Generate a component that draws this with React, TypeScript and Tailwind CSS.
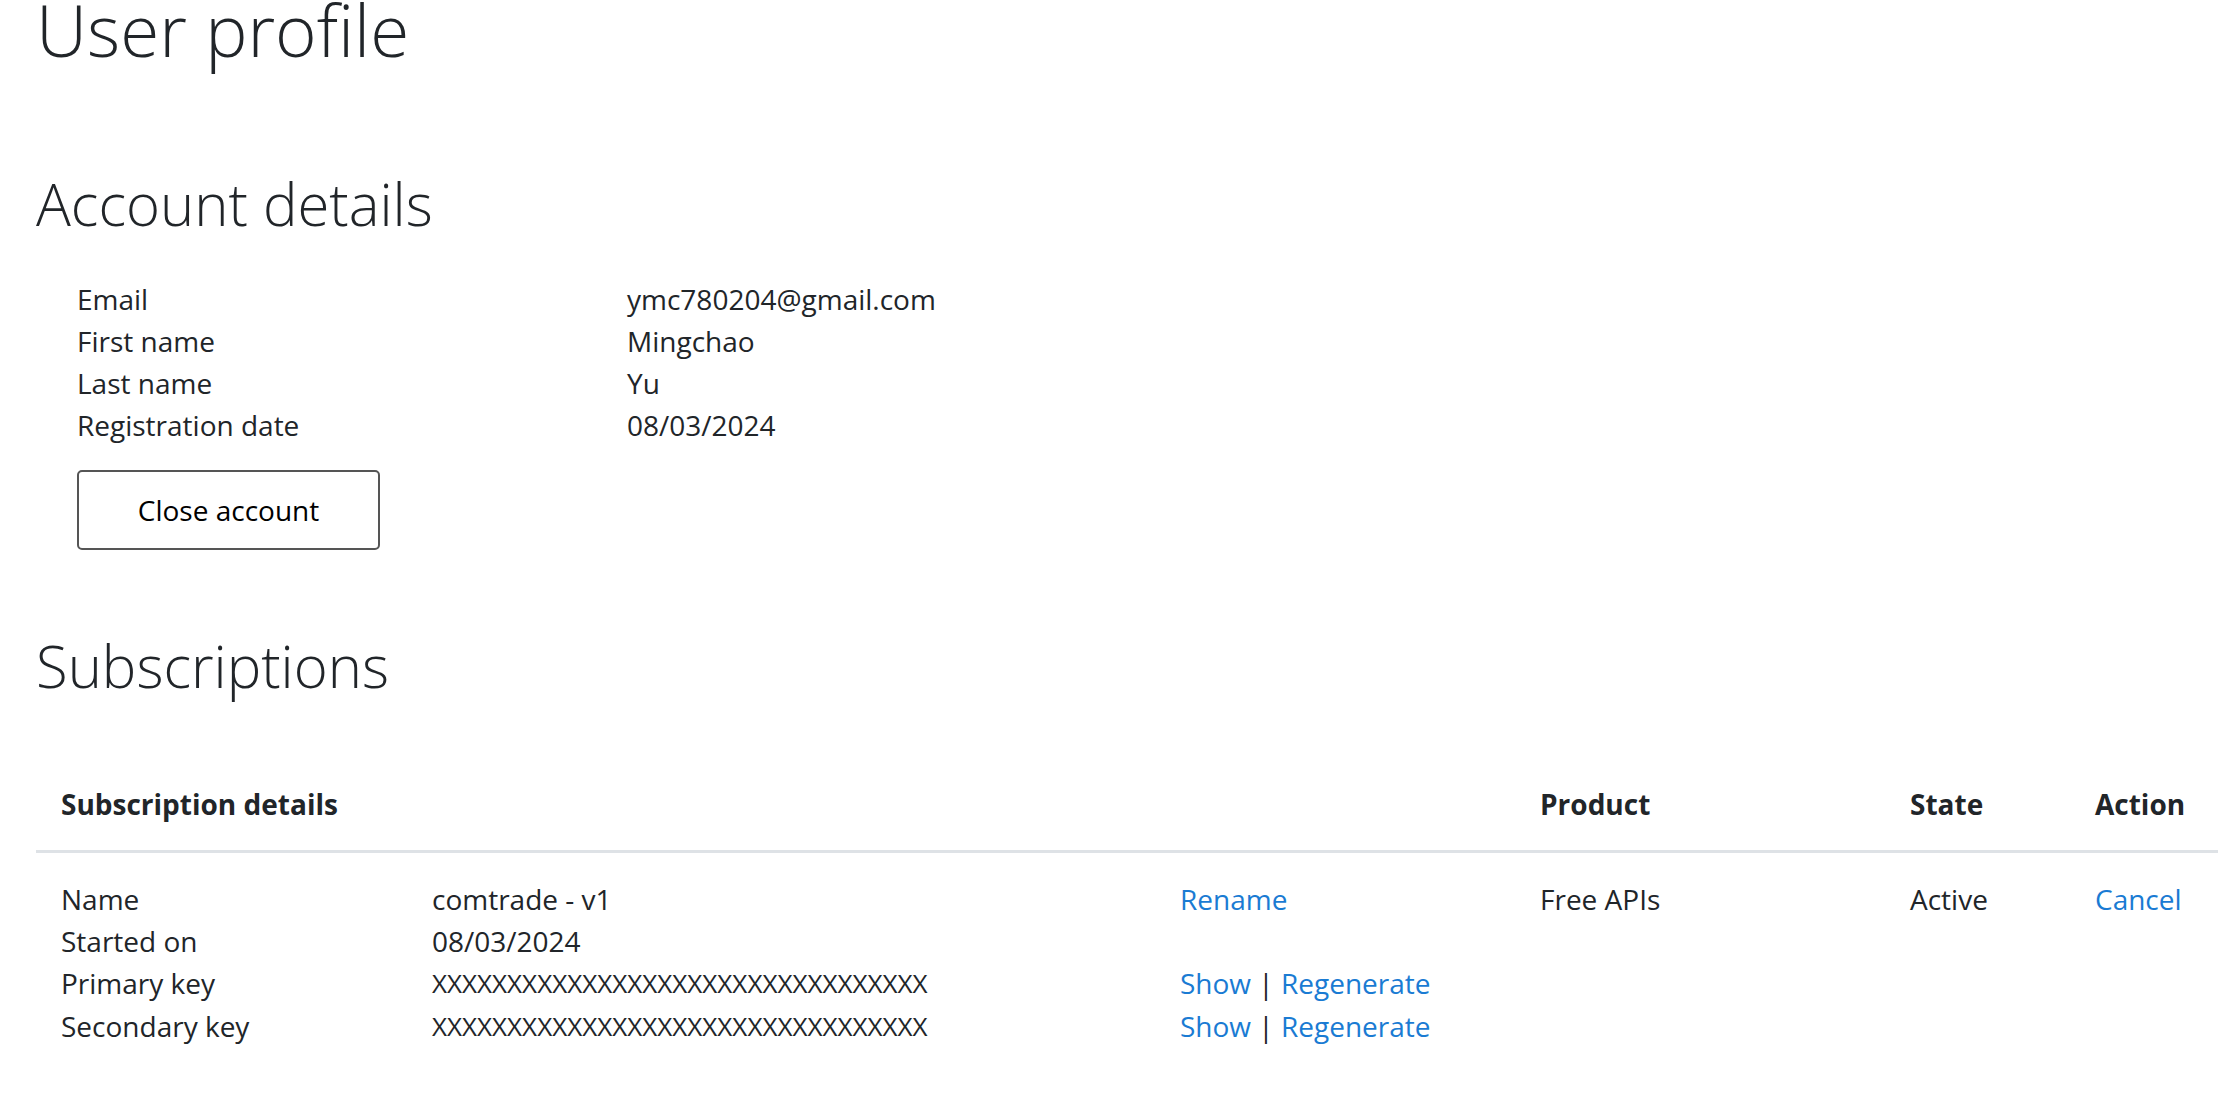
const account = [
  { label: "Email", value: "ymc780204@gmail.com" },
  { label: "First name", value: "Mingchao" },
  { label: "Last name", value: "Yu" },
  { label: "Registration date", value: "08/03/2024" },
];

const maskedKey = "XXXXXXXXXXXXXXXXXXXXXXXXXXXXXXXXX";

function KeyActions() {
  return (
    <span>
      <a href="#" className="text-[#1a7bd3]">Show</a>
      <span className="text-[#212529]"> | </span>
      <a href="#" className="text-[#1a7bd3]">Regenerate</a>
    </span>
  );
}

export default function App() {
  return (
    <div className="min-h-screen bg-white pl-[36px] text-[28px] leading-[42px] text-[#212529] font-['Open_Sans',sans-serif] overflow-hidden">
      <h1 className="mt-[2px] text-[71px] font-[350] leading-[56px]">User profile</h1>

      <h2 className="mt-[111px] text-[58px] font-[350] leading-[1.2]">Account details</h2>

      <div className="mt-[39px] pl-[41px]">
        <dl>
          {account.map((row) => (
            <div key={row.label} className="flex">
              <dt className="w-[550px] shrink-0">{row.label}</dt>
              <dd>{row.value}</dd>
            </div>
          ))}
        </dl>
        <button className="mt-[24px] h-[80px] w-[303px] rounded-[5px] border-2 border-[#555555] bg-white text-black">
          Close account
        </button>
      </div>

      <h2 className="mt-[81px] text-[58px] font-[350] leading-[1.2]">Subscriptions</h2>

      <div className="mt-[58px] w-[2182px]">
        <div className="flex border-b-[3px] border-[#dee2e6] py-[25px] font-bold">
          <div className="w-[1479px] pl-[25px]">Subscription details</div>
          <div className="w-[370px] pl-[25px]">Product</div>
          <div className="w-[185px] pl-[25px]">State</div>
          <div className="flex-1 pl-[25px]">Action</div>
        </div>

        <div className="flex pt-[25px]">
          <div className="w-[1479px] pl-[25px]">
            <div className="grid grid-cols-[371px_748px_1fr]">
              <div>Name</div>
              <div>comtrade - v1</div>
              <div>
                <a href="#" className="text-[#1a7bd3]">Rename</a>
              </div>
              <div>Started on</div>
              <div>08/03/2024</div>
              <div />
              <div>Primary key</div>
              <div className="text-[26px]">{maskedKey}</div>
              <div>
                <KeyActions />
              </div>
              <div className="pt-[1px]">Secondary key</div>
              <div className="pt-[1px] text-[26px]">{maskedKey}</div>
              <div className="pt-[1px]">
                <KeyActions />
              </div>
            </div>
          </div>
          <div className="w-[370px] pl-[25px]">Free APIs</div>
          <div className="w-[185px] pl-[25px]">Active</div>
          <div className="flex-1 pl-[25px]">
            <a href="#" className="text-[#1a7bd3]">Cancel</a>
          </div>
        </div>
      </div>
    </div>
  );
}
